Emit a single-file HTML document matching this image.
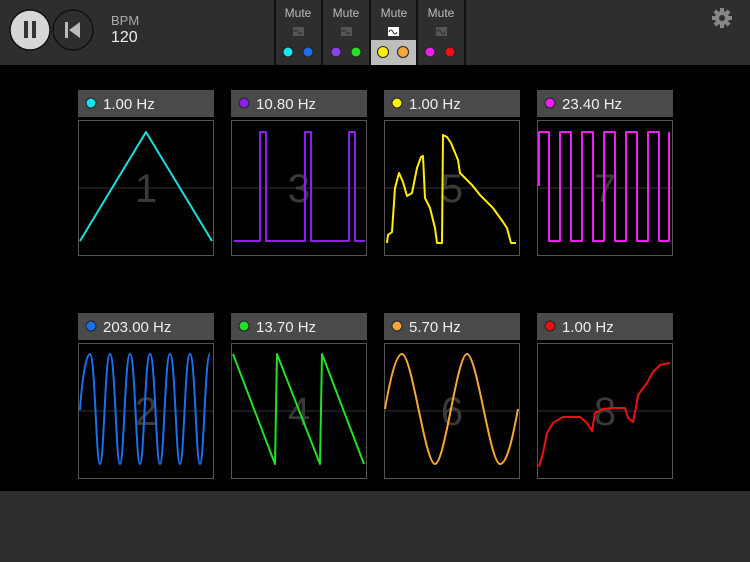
<!DOCTYPE html>
<html><head><meta charset="utf-8"><style>
*{margin:0;padding:0;box-sizing:border-box}
body{width:750px;height:562px;background:#000;position:relative;overflow:hidden;font-family:"Liberation Sans",sans-serif}
.top{position:absolute;left:0;top:0;width:750px;height:65px;background:#2e2e2e}
.bot{position:absolute;left:0;top:491px;width:750px;height:71px;background:#2e2e2e}
</style></head><body>
<div class="top"></div>
<div class="bot"></div>
<svg width="750" height="562" style="position:absolute;left:0;top:0">
<circle cx="30" cy="30" r="20" fill="#d6d6d6" stroke="#111" stroke-width="1.5"/>
<rect x="24" y="21" width="4" height="17" fill="#333"/><rect x="32" y="21" width="4" height="17" fill="#333"/>
<circle cx="73" cy="30" r="20" fill="none" stroke="#111" stroke-width="1.5"/>
<rect x="65" y="22" width="3" height="16" fill="#bbb"/><polygon points="80,22 80,38 69,30" fill="#bbb"/>
<text x="111" y="25" fill="#aaa" font-size="13" font-family="Liberation Sans">BPM</text>
<text x="111" y="42" fill="#eee" font-size="16" font-family="Liberation Sans">120</text>
<rect x="371" y="40" width="46" height="25" fill="#bdbdbd"/>
<g stroke="#111" stroke-width="2">
<line x1="275" y1="0" x2="275" y2="65"/><line x1="322" y1="0" x2="322" y2="65"/>
<line x1="370" y1="0" x2="370" y2="65"/><line x1="417" y1="0" x2="417" y2="65"/><line x1="465" y1="0" x2="465" y2="65"/>
</g>
<g font-size="12" fill="#bbb" font-family="Liberation Sans" text-anchor="middle">
<text x="298" y="17">Mute</text><text x="346" y="17">Mute</text><text x="394" y="17">Mute</text><text x="441" y="17">Mute</text>
</g>
<g>
<rect x="293" y="27" width="11" height="9" fill="#555"/><path d="M294 32 q2-4 4 0 t4 0" stroke="#2e2e2e" fill="none"/>
<rect x="341" y="27" width="11" height="9" fill="#555"/><path d="M342 32 q2-4 4 0 t4 0" stroke="#2e2e2e" fill="none"/>
<rect x="388" y="27" width="11" height="9" fill="#fff"/><path d="M389 32 q2-4 4 0 t4 0" stroke="#333" fill="none"/>
<rect x="436" y="27" width="11" height="9" fill="#555"/><path d="M437 32 q2-4 4 0 t4 0" stroke="#2e2e2e" fill="none"/>
</g>
<g stroke="#222" stroke-width="1">
<circle cx="288" cy="52" r="5" fill="#18e4f0"/><circle cx="308" cy="52" r="5" fill="#1a6ff0"/>
<circle cx="336" cy="52" r="5" fill="#8a3ff0"/><circle cx="356" cy="52" r="5" fill="#22e022"/>
<circle cx="383" cy="52" r="5.5" fill="#ffef00"/><circle cx="403" cy="52" r="5.5" fill="#f5a63a"/>
<circle cx="430" cy="52" r="5" fill="#ee1ef0"/><circle cx="450" cy="52" r="5" fill="#ee1111"/>
</g>
<g transform="translate(722,18)" fill="#888">
<circle r="7"/>
<g><rect x="-2" y="-10" width="4" height="20"/><rect x="-2" y="-10" width="4" height="20" transform="rotate(45)"/><rect x="-2" y="-10" width="4" height="20" transform="rotate(90)"/><rect x="-2" y="-10" width="4" height="20" transform="rotate(135)"/></g>
<circle r="3" fill="#2e2e2e"/>
</g>
<defs>
<g id="card">
<rect x="0" y="0" width="136" height="27" fill="#4a4a4a"/>
<rect x="0.5" y="30.5" width="135" height="135" fill="#000" stroke="#555"/>
<line x1="1" y1="98" x2="135" y2="98" stroke="#333"/>
</g>
</defs>
<g font-family="Liberation Sans">
<use href="#card" x="78" y="90"/><use href="#card" x="231" y="90"/><use href="#card" x="384" y="90"/><use href="#card" x="537" y="90"/>
<use href="#card" x="78" y="313"/><use href="#card" x="231" y="313"/><use href="#card" x="384" y="313"/><use href="#card" x="537" y="313"/>
<g font-size="40" fill="#3a3a3a" text-anchor="middle">
<text x="146" y="202">1</text><text x="299" y="202">3</text><text x="452" y="202">5</text><text x="605" y="202">7</text>
<text x="146" y="425">2</text><text x="299" y="425">4</text><text x="452" y="425">6</text><text x="605" y="425">8</text>
</g>
<g font-size="15" fill="#eee">
<text x="103" y="109">1.00 Hz</text><text x="256" y="109">10.80 Hz</text><text x="409" y="109">1.00 Hz</text><text x="562" y="109">23.40 Hz</text>
<text x="103" y="332">203.00 Hz</text><text x="256" y="332">13.70 Hz</text><text x="409" y="332">5.70 Hz</text><text x="562" y="332">1.00 Hz</text>
</g>
<g stroke="#222" stroke-width="1">
<circle cx="91" cy="103" r="5" fill="#18e4f0"/><circle cx="244" cy="103" r="5" fill="#8a1ff0"/><circle cx="397" cy="103" r="5" fill="#ffef00"/><circle cx="550" cy="103" r="5" fill="#ee1ef0"/>
<circle cx="91" cy="326" r="5" fill="#1a6ff0"/><circle cx="244" cy="326" r="5" fill="#22e022"/><circle cx="397" cy="326" r="5" fill="#f5a63a"/><circle cx="550" cy="326" r="5" fill="#ee1111"/>
</g>
</g>
<g fill="none" stroke-width="2" stroke-linejoin="round">
<polyline stroke="#1ce0e0" points="80,241 146,132 212,241"/>
<polyline stroke="#8a1ff0" points="234,241 260,241 260,132 266,132 266,241 305,241 305,132 311,132 311,241 349,241 349,132 355,132 355,241 365,241"/>
<polyline stroke="#ffef00" points="387,243 388,235 392,232 395,188 399,173 403,182 407,196 412,193 417,168 421,157 423,156 425,198 430,208 435,228 437,243 442,243 443,135 447,137 451,143 458,160 460,173 467,180 472,185 480,195 493,208 503,222 507,228 511,243 516,243"/>
<polyline stroke="#ee1ef0" points="539,186 539,132 549,132 549,241 560,241 560,132 571,132 571,241 582,241 582,132 593,132 593,241 604,241 604,132 615,132 615,241 626,241 626,132 637,132 637,241 648,241 648,132 659,132 659,241 669,241 669,132"/>
<polyline stroke="#22e022" points="233,354 275,464 277,354 320,464 322,354 364,464"/>
<path stroke="#1a6ff0" d="M80,410 C82,380 86,354 90,354 C95,354 96,464 100,464 C104,464 105,354 110,354 C115,354 116,464 120,464 C124,464 125,354 130,354 C135,354 136,464 140,464 C144,464 145,354 150,354 C155,354 156,464 160,464 C164,464 165,354 170,354 C175,354 176,464 180,464 C184,464 185,354 190,354 C195,354 196,464 200,464 C204,464 205,354 210,354"/>
<path stroke="#f5a63a" d="M385,409 C390,380 396,354 402,354 C412,354 425,464 435,464 C445,464 457,354 467,354 C477,354 490,464 500,464 C508,464 514,430 518,409"/>
<polyline stroke="#ee1111" points="539,467 543,453 547,433 553,423 563,417 580,417 587,423 592,431 595,413 603,409 613,408 625,408 628,418 633,422 636,407 638,395 647,383 653,372 660,365 670,363"/>
</g>
</svg>
</body></html>
